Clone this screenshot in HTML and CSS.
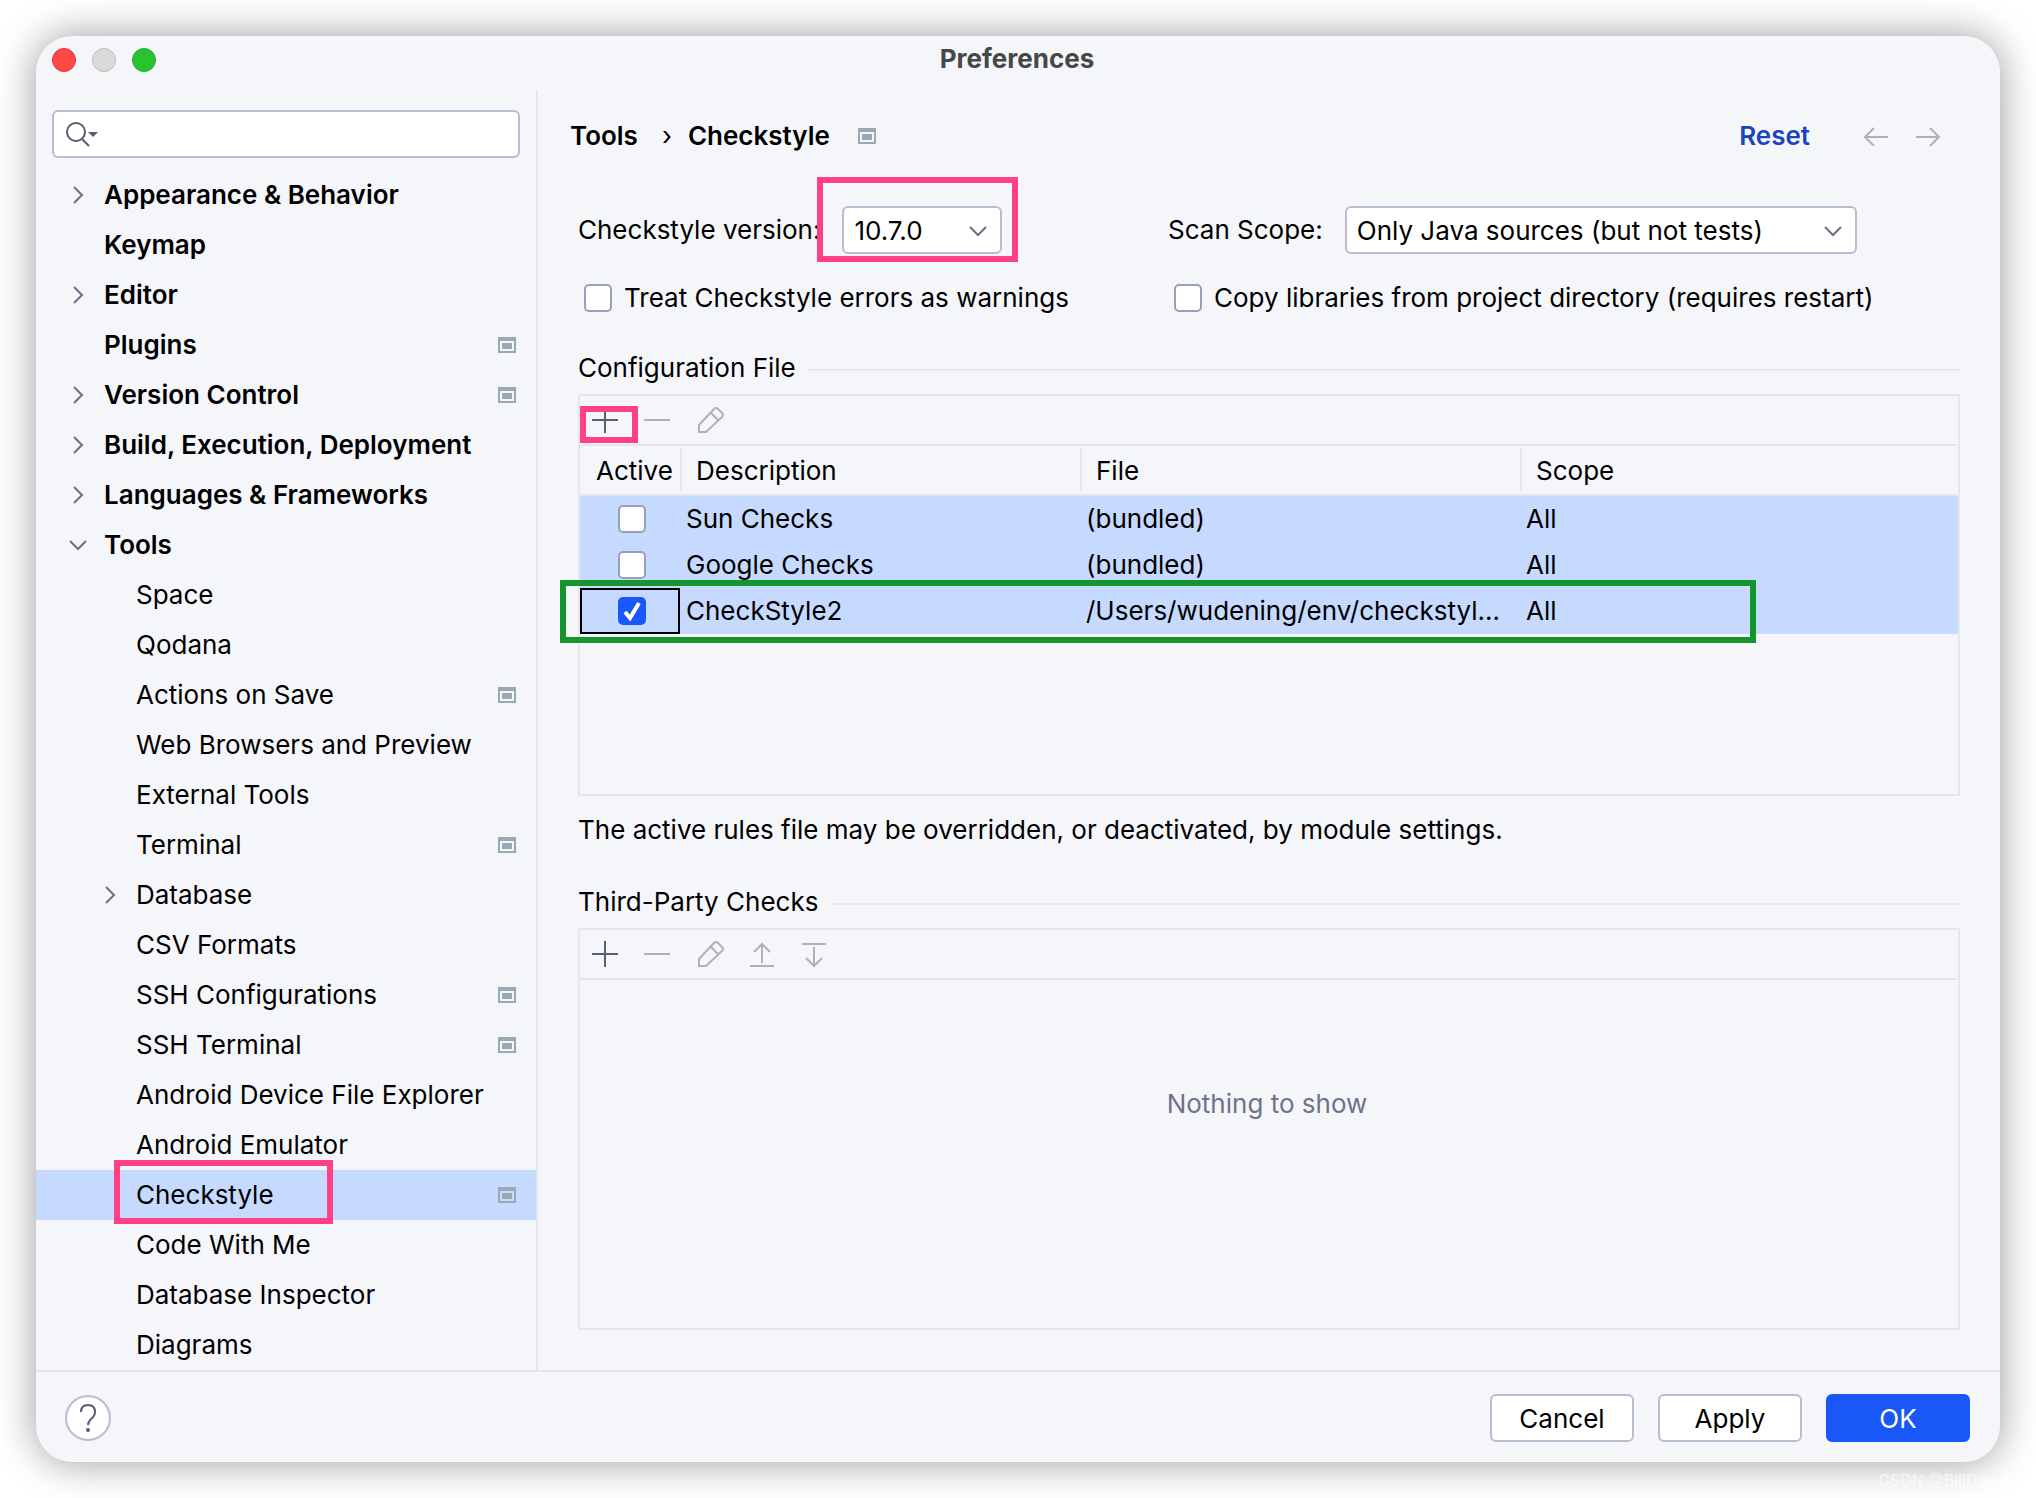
FILE: index.html
```html
<!DOCTYPE html>
<html lang="en">
<head>
<meta charset="utf-8">
<title>Preferences</title>
<link rel="stylesheet" href="styles.css">
</head>
<body>
<svg class="sprite" aria-hidden="true">
  <symbol id="i-right" viewBox="0 0 16 20"><path d="M4 2l8 8-8 8" fill="none" stroke="currentColor" stroke-width="2"/></symbol>
  <symbol id="i-down" viewBox="0 0 20 16"><path d="M2 4l8 8 8-8" fill="none" stroke="currentColor" stroke-width="2"/></symbol>
  <symbol id="i-module" viewBox="0 0 18 16"><path fill="currentColor" fill-rule="evenodd" d="M0 0h18v16H0zM2 4v10h14V4z"/><path fill="currentColor" d="M4 6h10v6H4z"/></symbol>
  <symbol id="i-plus" viewBox="0 0 32 32"><path d="M15 3v26M2 16h26" fill="none" stroke="currentColor" stroke-width="2"/></symbol>
  <symbol id="i-minus" viewBox="0 0 32 32"><path d="M2 16h26" fill="none" stroke="currentColor" stroke-width="2"/></symbol>
  <symbol id="i-pencil" viewBox="0 0 32 32"><path d="M5 28v-7L20 5q2-2 4 0l4 4q2 2 0 4L12 28zM17 9l7 7" fill="none" stroke="currentColor" stroke-width="2"/></symbol>
  <symbol id="i-up" viewBox="0 0 32 32"><path d="M4 28h24M16 25V6M8 14l8-8 8 8" fill="none" stroke="currentColor" stroke-width="2"/></symbol>
  <symbol id="i-bottom" viewBox="0 0 32 32"><path d="M4 6h24M16 9v19M8 20l8 8 8-8" fill="none" stroke="currentColor" stroke-width="2"/></symbol>
  <symbol id="i-back" viewBox="0 0 24 20"><path d="M24 11H2M10 2l-9 9 9 9" fill="none" stroke="currentColor" stroke-width="2"/></symbol>
  <symbol id="i-forward" viewBox="0 0 24 20"><path d="M0 11h22M14 2l9 9-9 9" fill="none" stroke="currentColor" stroke-width="2"/></symbol>
</svg>

<div class="window">
  <header class="titlebar">
    <div class="lights"><span class="light close"></span><span class="light minimize"></span><span class="light maximize"></span></div>
    <h1 class="title">Preferences</h1>
  </header>

  <div class="body">
    <aside class="sidebar">
      <div class="search">
        <svg class="search-icon" viewBox="0 0 32 26" aria-hidden="true"><circle cx="10" cy="11" r="9" fill="none" stroke="currentColor" stroke-width="2"/><path d="M16 18l7 7" stroke="currentColor" stroke-width="2"/><path d="M22 11h10l-5 5z" fill="currentColor"/></svg>
        <input class="search-input" type="text" aria-label="Search settings">
      </div>
      <ul class="tree">
        <li class="row top"><svg class="arrow"><use href="#i-right"/></svg><span class="name">Appearance &amp; Behavior</span></li>
        <li class="row top"><span class="arrow"></span><span class="name">Keymap</span></li>
        <li class="row top"><svg class="arrow"><use href="#i-right"/></svg><span class="name">Editor</span></li>
        <li class="row top"><span class="arrow"></span><span class="name">Plugins</span><svg class="module"><use href="#i-module"/></svg></li>
        <li class="row top"><svg class="arrow"><use href="#i-right"/></svg><span class="name">Version Control</span><svg class="module"><use href="#i-module"/></svg></li>
        <li class="row top"><svg class="arrow"><use href="#i-right"/></svg><span class="name">Build, Execution, Deployment</span></li>
        <li class="row top"><svg class="arrow"><use href="#i-right"/></svg><span class="name">Languages &amp; Frameworks</span></li>
        <li class="row top"><svg class="arrow"><use href="#i-down"/></svg><span class="name">Tools</span></li>
        <li class="row"><span class="arrow"></span><span class="name">Space</span></li>
        <li class="row"><span class="arrow"></span><span class="name">Qodana</span></li>
        <li class="row"><span class="arrow"></span><span class="name">Actions on Save</span><svg class="module"><use href="#i-module"/></svg></li>
        <li class="row"><span class="arrow"></span><span class="name">Web Browsers and Preview</span></li>
        <li class="row"><span class="arrow"></span><span class="name">External Tools</span></li>
        <li class="row"><span class="arrow"></span><span class="name">Terminal</span><svg class="module"><use href="#i-module"/></svg></li>
        <li class="row"><svg class="arrow"><use href="#i-right"/></svg><span class="name">Database</span></li>
        <li class="row"><span class="arrow"></span><span class="name">CSV Formats</span></li>
        <li class="row"><span class="arrow"></span><span class="name">SSH Configurations</span><svg class="module"><use href="#i-module"/></svg></li>
        <li class="row"><span class="arrow"></span><span class="name">SSH Terminal</span><svg class="module"><use href="#i-module"/></svg></li>
        <li class="row"><span class="arrow"></span><span class="name">Android Device File Explorer</span></li>
        <li class="row"><span class="arrow"></span><span class="name">Android Emulator</span></li>
        <li class="row selected"><span class="arrow"></span><span class="name">Checkstyle</span><svg class="module"><use href="#i-module"/></svg><span class="mark mark-tree"></span></li>
        <li class="row"><span class="arrow"></span><span class="name">Code With Me</span></li>
        <li class="row"><span class="arrow"></span><span class="name">Database Inspector</span></li>
        <li class="row"><span class="arrow"></span><span class="name">Diagrams</span></li>
      </ul>
    </aside>

    <main class="content">
      <div class="crumbs">
        <span>Tools</span><span class="crumb-sep">›</span><span>Checkstyle</span>
        <svg class="module"><use href="#i-module"/></svg>
        <a class="reset" href="#">Reset</a>
        <button class="nav" type="button" aria-label="Back"><svg><use href="#i-back"/></svg></button>
        <button class="nav" type="button" aria-label="Forward"><svg><use href="#i-forward"/></svg></button>
      </div>

      <div class="options">
        <div class="field">
          <label for="version">Checkstyle version:</label>
          <div class="combo combo-version">
            <select id="version"><option>10.7.0</option></select>
            <svg class="combo-arrow"><use href="#i-down"/></svg>
            <span class="mark mark-version"></span>
          </div>
        </div>
        <div class="field">
          <label for="scope">Scan Scope:</label>
          <div class="combo combo-scope">
            <select id="scope"><option>Only Java sources (but not tests)</option></select>
            <svg class="combo-arrow"><use href="#i-down"/></svg>
          </div>
        </div>
        <label class="check"><input class="box" type="checkbox">Treat Checkstyle errors as warnings</label>
        <label class="check"><input class="box" type="checkbox">Copy libraries from project directory (requires restart)</label>
      </div>

      <h2 class="section">Configuration File</h2>
      <div class="panel">
        <div class="toolbar">
          <button class="tool active" type="button" aria-label="Add"><svg><use href="#i-plus"/></svg><span class="mark mark-add"></span></button>
          <button class="tool" type="button" aria-label="Remove"><svg><use href="#i-minus"/></svg></button>
          <button class="tool" type="button" aria-label="Edit"><svg><use href="#i-pencil"/></svg></button>
        </div>
        <table class="files">
          <colgroup><col class="c-active"><col class="c-desc"><col class="c-file"><col></colgroup>
          <thead><tr><th>Active</th><th>Description</th><th>File</th><th>Scope</th></tr></thead>
          <tbody>
            <tr><td><input class="box" type="checkbox" aria-label="Sun Checks active"></td><td>Sun Checks</td><td>(bundled)</td><td>All</td></tr>
            <tr><td><input class="box" type="checkbox" aria-label="Google Checks active"></td><td>Google Checks</td><td>(bundled)</td><td>All</td></tr>
            <tr class="current"><td><input class="box" type="checkbox" checked aria-label="CheckStyle2 active"><span class="mark mark-row"></span></td><td>CheckStyle2</td><td>/Users/wudening/env/checkstyl...</td><td>All</td></tr>
          </tbody>
        </table>
      </div>
      <p class="note">The active rules file may be overridden, or deactivated, by module settings.</p>

      <h2 class="section">Third-Party Checks</h2>
      <div class="panel">
        <div class="toolbar">
          <button class="tool active" type="button" aria-label="Add"><svg><use href="#i-plus"/></svg></button>
          <button class="tool" type="button" aria-label="Remove"><svg><use href="#i-minus"/></svg></button>
          <button class="tool" type="button" aria-label="Edit"><svg><use href="#i-pencil"/></svg></button>
          <button class="tool" type="button" aria-label="Move up"><svg><use href="#i-up"/></svg></button>
          <button class="tool" type="button" aria-label="Move down"><svg><use href="#i-bottom"/></svg></button>
        </div>
        <p class="empty">Nothing to show</p>
      </div>
    </main>
  </div>

  <footer class="footer">
    <button class="help" type="button" aria-label="Help"><svg viewBox="0 0 20 30"><path d="M3 9q0-7 7-7t7 7q0 4-4 7-3 3-3 6" fill="none" stroke="currentColor" stroke-width="2"/><circle cx="10" cy="27" r="2" fill="currentColor"/></svg></button>
    <button class="btn" type="button">Cancel</button>
    <button class="btn" type="button">Apply</button>
    <button class="btn primary" type="button">OK</button>
  </footer>
</div>
<div class="watermark">CSDN @BillDavidup</div>
</body>
</html>
```
FILE: styles.css
```css
* { box-sizing: border-box; }

body {
  margin: 0;
  min-height: 100vh;
  padding: 36px;
  display: flex;
  position: relative;
  overflow: hidden;
  background: #fff;
  color: #000;
  font: 26px/32px Inter, "Liberation Sans", sans-serif;
}

h1, h2, p, ul { margin: 0; padding: 0; font-size: inherit; font-weight: inherit; list-style: none; }
button, select, input { font: inherit; color: inherit; margin: 0; }
svg { display: block; flex: none; }
.sprite { position: absolute; width: 0; height: 0; }

.window {
  flex: 1;
  display: flex;
  flex-direction: column;
  background: #f5f6fa;
  border-radius: 36px;
  box-shadow: 0 0 40px rgba(0, 0, 0, .4);
}

/* title bar */
.titlebar {
  display: grid;
  grid-template-columns: 1fr auto 1fr;
  align-items: center;
  height: 54px;
  padding: 0 18px 6px 16px;
}
.lights { display: flex; gap: 16px; }
.light { width: 24px; height: 24px; border: 1px solid; border-radius: 50%; }
.close { background: #ff4746; border-color: #e2383a; }
.minimize { background: #dadada; border-color: #bcbcbc; }
.maximize { background: #29c331; border-color: #1fad28; }
.title { padding-bottom: 2px; font-weight: 700; color: #454846; }

.body { flex: 1; display: flex; }

/* settings tree */
.sidebar { width: 502px; border-right: 2px solid #e6e7ec; padding-top: 20px; }
.search {
  display: flex;
  align-items: center;
  height: 48px;
  margin: 0 16px 12px;
  padding-left: 12px;
  border: 2px solid #b9bdcf;
  border-radius: 6px;
  background: #fff;
}
.search-icon { width: 32px; height: 26px; color: #5a5d72; }
.search-input { flex: 1; min-width: 0; border: 0; outline: 0; background: none; }
.row {
  position: relative;
  display: flex;
  align-items: center;
  height: 50px;
  padding: 0 20px 0 64px;
}
.row.top { padding-left: 32px; font-weight: 600; }
.row .arrow { width: 20px; height: 20px; margin-right: 16px; color: #6c6f86; flex: none; }
.name { flex: 1; white-space: nowrap; }
.selected { background: #c6d9ff; }
.module { width: 18px; height: 16px; color: #9aa9b3; }

/* page content */
.content { flex: 1; min-width: 0; padding: 30px 40px 40px; }
.crumbs { display: flex; align-items: center; height: 32px; margin-left: -8px; padding-right: 20px; font-weight: 600; }
.crumb-sep { margin: 0 16px 0 24px; font-weight: 400; }
.crumbs .module { margin-left: 28px; }
.reset { margin-left: auto; margin-right: 26px; color: #1b44ba; text-decoration: none; }
.nav { width: 24px; padding: 0; margin-left: 28px; border: 0; background: none; color: #afb1b3; }
.nav svg { width: 24px; height: 20px; overflow: visible; }

.options {
  display: grid;
  grid-template-columns: 590px 1fr;
  row-gap: 28px;
  padding-top: 54px;
}
.field { display: flex; align-items: center; gap: 22px; height: 48px; }
.combo { position: relative; }
.combo select {
  appearance: none;
  display: block;
  width: 100%;
  height: 48px;
  padding: 2px 10px 0;
  border: 2px solid #b9bdcf;
  border-radius: 6px;
  background: #fff;
}
.combo-version { width: 160px; }
.combo-scope { width: 512px; }
.combo-arrow { position: absolute; right: 14px; top: 17px; width: 20px; height: 16px; color: #6c6f86; pointer-events: none; }
.check { display: flex; align-items: center; gap: 12px; height: 32px; padding-left: 6px; white-space: nowrap; }
.box {
  appearance: none;
  flex: none;
  display: block;
  width: 28px;
  height: 28px;
  border: 2px solid #9a9fb8;
  border-radius: 5px;
  background: #fff;
}
.box:checked {
  border-color: #1a57f8;
  background: #1a57f8 url('data:image/svg+xml,<svg xmlns="http://www.w3.org/2000/svg" viewBox="0 0 24 24"><path d="M5 13l5 6 9-15" fill="none" stroke="white" stroke-width="4"/></svg>') center / 24px 24px;
}

.section { display: flex; align-items: center; gap: 12px; height: 32px; margin: 38px 0 10px; }
.section::after { content: ""; flex: 1; height: 2px; margin-top: 4px; background: #e6e7ec; }

.panel { min-height: 402px; border: 2px solid #e6e7ec; }
.toolbar { display: flex; gap: 20px; height: 50px; padding: 8px 10px; border-bottom: 2px solid #e6e7ec; }
.tool { position: relative; width: 32px; height: 32px; padding: 0; border: 0; background: none; color: #afb1b3; }
.tool svg { width: 32px; height: 32px; }
.tool.active { color: #5a5d72; }

.files { width: 100%; table-layout: fixed; border-collapse: separate; border-spacing: 0; text-align: left; }
.c-active { width: 102px; }
.c-desc { width: 400px; }
.c-file { width: 440px; }
.files th {
  height: 50px;
  padding: 2px 14px 0;
  border-bottom: 2px solid #e6e7ec;
  font-weight: 400;
  background: linear-gradient(#e6e7ec, #e6e7ec) right center / 2px 44px no-repeat;
}
.files th:first-child { padding: 2px 0 0 16px; }
.files th:last-child { background: none; }
.files tbody tr { background: #c6d9ff; }
.files td { height: 46px; padding: 0 0 0 4px; white-space: nowrap; }
.files td:first-child { position: relative; padding: 0 0 0 38px; }
.current td:first-child::before { content: ""; position: absolute; inset: 0 2px 0 0; border: 2px solid #000; }

.note { margin-top: 18px; }
.note + .section { margin-top: 40px; }
.empty { padding: 108px 4px 0 0; text-align: center; color: #6f7288; }

/* footer */
.footer { display: flex; align-items: center; gap: 24px; height: 92px; padding: 2px 30px 0 29px; border-top: 2px solid #e6e7ec; }
.help {
  display: grid;
  place-items: center;
  width: 46px;
  height: 46px;
  margin-right: auto;
  padding: 0;
  border: 2px solid #b9bdcf;
  border-radius: 50%;
  background: #fff;
  color: #5a5d72;
}
.help svg { width: 20px; height: 30px; }
.btn { width: 144px; height: 48px; padding: 2px 0 0; border: 2px solid #b9bdcf; border-radius: 6px; background: #fff; }
.primary { border-color: #1a57f8; background: #1a57f8; color: #fff; }

/* highlight frames */
.mark { position: absolute; z-index: 1; border: 6px solid #ff4085; pointer-events: none; }
.mark-tree { left: 78px; top: -10px; width: 219px; height: 64px; }
.mark-version { left: -25px; top: -29px; width: 201px; height: 85px; }
.mark-add { left: -10px; top: 2px; width: 58px; height: 37px; }
.mark-row { left: -20px; top: -8px; width: 1196px; height: 63px; border-color: #16952f; }

.watermark { position: absolute; right: 8px; bottom: 6px; font-size: 16px; line-height: 24px; white-space: nowrap; color: rgba(255, 255, 255, .7); }
```
